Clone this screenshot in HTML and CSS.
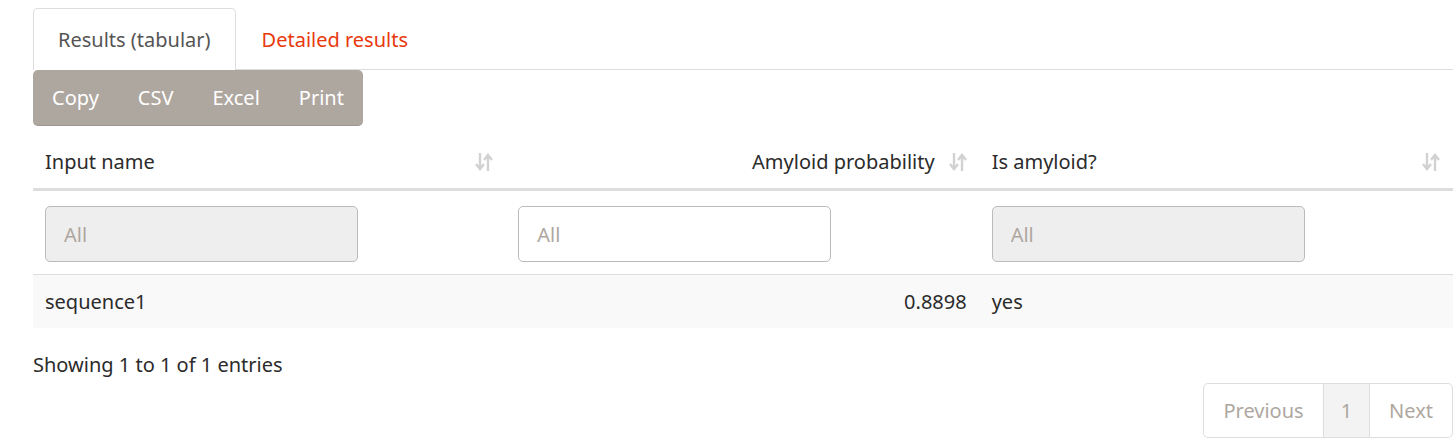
FILE: index.html
```html
<!DOCTYPE html>
<html>
<head>
<meta charset="utf-8">
<link rel="stylesheet" href="styles.css">
</head>
<body>
<div class="page">
  <ul class="tabs">
    <li class="tab active"><a>Results (tabular)</a></li>
    <li class="tab"><a class="link">Detailed results</a></li>
  </ul>
  <div class="btn-group">
    <span class="btn">Copy</span><span class="btn">CSV</span><span class="btn">Excel</span><span class="btn">Print</span>
  </div>
  <table class="grid">
    <thead>
      <tr>
        <th class="col">Input name<svg class="sort" viewBox="0 0 20 22"><path d="M6 2v15M2 13l4 5 4-5" /><path d="M14 20V5M10 9l4-5 4 5" /></svg></th>
        <th class="col right">Amyloid probability<svg class="sort" viewBox="0 0 20 22"><path d="M6 2v15M2 13l4 5 4-5" /><path d="M14 20V5M10 9l4-5 4 5" /></svg></th>
        <th class="col">Is amyloid?<svg class="sort" viewBox="0 0 20 22"><path d="M6 2v15M2 13l4 5 4-5" /><path d="M14 20V5M10 9l4-5 4 5" /></svg></th>
      </tr>
    </thead>
    <tbody>
      <tr class="filters">
        <td><input class="filter disabled" placeholder="All" disabled></td>
        <td><input class="filter" placeholder="All"></td>
        <td><input class="filter disabled" placeholder="All" disabled></td>
      </tr>
      <tr class="data">
        <td>sequence1</td>
        <td class="right num">0.8898</td>
        <td>yes</td>
      </tr>
    </tbody>
  </table>
  <div class="info">Showing 1 to 1 of 1 entries</div>
  <div class="pager-row">
    <ul class="pager">
      <li class="pg">Previous</li>
      <li class="pg current">1</li>
      <li class="pg">Next</li>
    </ul>
  </div>
</div>
</body>
</html>
```
FILE: styles.css
```css
html, body {
  margin: 0;
  padding: 0;
  background: #fff;
}
body {
  font-family: "Noto Sans", "Open Sans", sans-serif;
  font-size: 20px;
  color: #2b2b2b;
}
.page {
  margin: 8px 3px 0 33px;
}
.tabs {
  list-style: none;
  margin: 0;
  padding: 0;
  display: flex;
  border-bottom: 1px solid #ddd;
  height: 61px;
}
.tab a {
  display: block;
  height: 61px;
  line-height: 61px;
  padding: 0 24px;
  border: 1px solid transparent;
  border-bottom: none;
  border-radius: 5px 5px 0 0;
  box-sizing: border-box;
  color: #555;
}
.tab.active a {
  background: #fff;
  border-color: #ddd;
  height: 62px;
  margin-bottom: -1px;
}
.tab .link {
  color: #e8380d;
  margin-left: 1px;
  padding-left: 24px;
}
.btn-group {
  display: inline-flex;
  background: #aea79f;
  border-radius: 5px;
  height: 56px;
  align-items: center;
  border-bottom: 1px solid #9e978f;
  box-sizing: border-box;
}
.btn {
  color: #fff;
  padding: 0 19.5px;
  font-size: 20px;
  line-height: 56px;
}
.btn:first-child {
  padding-left: 19px;
}
.grid {
  width: 1420px;
  margin-top: 11px;
  border-collapse: collapse;
  table-layout: fixed;
}
.grid th {
  position: relative;
  text-align: left;
  font-weight: normal;
  padding: 12px 45px 13px 12px;
  line-height: 26px;
  border-bottom: 3px solid #ddd;
}
.grid th.right {
  text-align: right;
}
.sort {
  position: absolute;
  right: 12px;
  top: 14px;
  width: 20px;
  height: 22px;
  fill: none;
  stroke: #d2d2d2;
  stroke-width: 2.4;
}
.grid td {
  padding: 0 12px;
}
.filters td {
  padding: 15px 12px 12px;
  border-bottom: 1px solid #ddd;
}
.filter {
  display: block;
  width: 313px;
  height: 56px;
  box-sizing: border-box;
  border: 1px solid #bbb;
  border-radius: 5px;
  padding: 0 18px;
  font-family: inherit;
  font-size: 20px;
  background: #fff;
  color: #333;
}
.filter.disabled {
  background: #eee;
}
.filter::placeholder {
  color: #aea79f;
}
.data td {
  background: #f9f9f9;
  height: 53px;
  line-height: 53px;
}
.grid td.right {
  text-align: right;
  padding-right: 13px;
}
.info {
  margin-top: 25px;
  line-height: 24px;
}
.pager-row {
  display: flex;
  justify-content: flex-end;
  margin-top: 6px;
}
.pager {
  display: flex;
  list-style: none;
  margin: 0;
  padding: 0;
  border: 1px solid #ddd;
  border-radius: 5px;
  height: 55px;
  box-sizing: border-box;
}
.pg {
  color: #aea79f;
  font-size: 20px;
  line-height: 53px;
  padding: 0 19px;
}
.pg.current {
  background: #f3f3f3;
  border-left: 1px solid #ddd;
  border-right: 1px solid #ddd;
  padding: 0 17px;
}
```
